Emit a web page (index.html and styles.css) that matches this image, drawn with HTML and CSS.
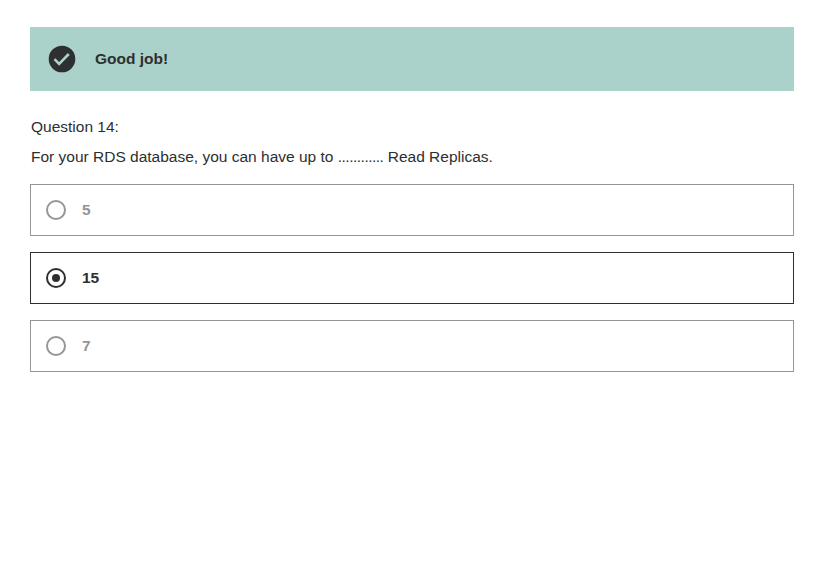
FILE: index.html
```html
<!DOCTYPE html>
<html lang="en">
<head>
<meta charset="utf-8">
<title>Quiz</title>
<link rel="stylesheet" href="styles.css">
</head>
<body>
<main class="quiz">
  <div class="alert">
    <svg class="alert-icon" viewBox="0 0 28 28"><circle cx="14" cy="14" r="13.3"/><path d="M6.5 14.2l4.6 4.6L20.8 9"/></svg>
    <strong class="alert-text">Good job!</strong>
  </div>
  <div class="question">
    <p class="number">Question 14:</p>
    <p class="prompt">For your RDS database, you can have up to <span class="dots">............</span> Read Replicas.</p>
  </div>
  <div class="answers">
    <div class="answer"><span class="radio"></span><span class="label">5</span></div>
    <div class="answer selected"><span class="radio"></span><span class="label">15</span></div>
    <div class="answer"><span class="radio"></span><span class="label">7</span></div>
  </div>
</main>
</body>
</html>
```
FILE: styles.css
```css
* { box-sizing: border-box; }
body { margin: 0; background: #fff; color: #2d2f31; font: 15.5px/30px "Liberation Sans", sans-serif; }
.quiz { padding: 27px 42px 0 30px; }
.alert { display: flex; align-items: center; height: 64px; padding-left: 18px; background: #abd2ca; }
.alert-icon { width: 28px; height: 28px; margin-right: 19px; fill: #2d2f31; }
.alert-icon path { fill: none; stroke: #abd2ca; stroke-width: 2.6; }
.alert-text { font-weight: 700; }
.question { padding: 21px 0 12px 1px; }
.question p { margin: 0; height: 30px; white-space: nowrap; }
.dots { letter-spacing: -0.5px; }
.answers { display: flex; flex-direction: column; gap: 16px; }
.answer { display: flex; align-items: center; height: 52px; padding-left: 15px; border: 1px solid #959595; color: #959595; font-weight: 700; }
.radio { display: grid; place-items: center; width: 20px; height: 20px; border: 2px solid currentColor; border-radius: 50%; margin-right: 16px; }
.selected { color: #2d2f31; border-color: #2d2f31; }
.selected .radio::after { content: ""; width: 8px; height: 8px; border-radius: 50%; background: currentColor; }
.label { font-size: 15.5px; }
```
